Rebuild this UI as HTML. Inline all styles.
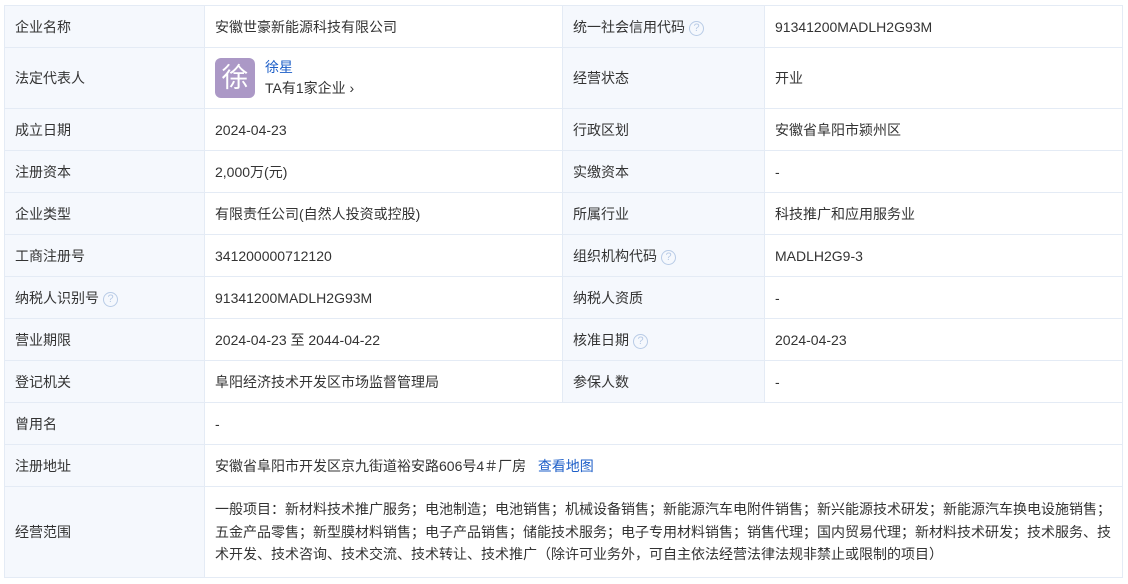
<!DOCTYPE html>
<html><head><meta charset="utf-8"><style>
html,body{margin:0;padding:0;background:#fff;width:1128px;height:584px;overflow:hidden}
body{font-family:"Liberation Sans","Noto Sans CJK SC",sans-serif;font-size:14px;color:#333}
table{position:absolute;left:4px;top:5px;border-collapse:collapse;table-layout:fixed;width:1118px}
td{border:1px solid #e4ebf5;padding:0 10px;height:41px;vertical-align:middle;line-height:20px}
td.l{background:#f5f8fd;color:#333}
.q{display:inline-block;width:15px;height:15px;border:1px solid #b8cbe6;border-radius:50%;color:#b8cbe6;font-size:11px;line-height:13px;text-align:center;vertical-align:1px;margin-left:4px;box-sizing:border-box}
a{color:#1e5fc8;text-decoration:none}
.av{display:inline-block;width:40px;height:40px;background:#ab98c6;border-radius:6px;color:#fff;font-size:27px;line-height:40px;text-align:center;vertical-align:middle}
</style></head><body>
<table>
<colgroup><col style="width:200px"><col style="width:358px"><col style="width:202px"><col style="width:358px"></colgroup>
<tr><td class="l">企业名称</td><td>安徽世豪新能源科技有限公司</td><td class="l">统一社会信用代码<span class="q">?</span></td><td>91341200MADLH2G93M</td></tr>
<tr><td class="l" style="height:60px">法定代表人</td><td><div style="display:flex;align-items:center"><span class="av">徐</span><div style="margin-left:10px;line-height:21px"><a>徐星</a><br>TA有1家企业 ›</div></div></td><td class="l">经营状态</td><td>开业</td></tr>
<tr><td class="l">成立日期</td><td>2024-04-23</td><td class="l">行政区划</td><td>安徽省阜阳市颍州区</td></tr>
<tr><td class="l">注册资本</td><td>2,000万(元)</td><td class="l">实缴资本</td><td>-</td></tr>
<tr><td class="l">企业类型</td><td>有限责任公司(自然人投资或控股)</td><td class="l">所属行业</td><td>科技推广和应用服务业</td></tr>
<tr><td class="l">工商注册号</td><td>341200000712120</td><td class="l">组织机构代码<span class="q">?</span></td><td>MADLH2G9-3</td></tr>
<tr><td class="l">纳税人识别号<span class="q">?</span></td><td>91341200MADLH2G93M</td><td class="l">纳税人资质</td><td>-</td></tr>
<tr><td class="l">营业期限</td><td>2024-04-23 至 2044-04-22</td><td class="l">核准日期<span class="q">?</span></td><td>2024-04-23</td></tr>
<tr><td class="l">登记机关</td><td>阜阳经济技术开发区市场监督管理局</td><td class="l">参保人数</td><td>-</td></tr>
<tr><td class="l">曾用名</td><td colspan="3">-</td></tr>
<tr><td class="l">注册地址</td><td colspan="3">安徽省阜阳市开发区京九街道裕安路606号4＃厂房 &nbsp;&nbsp;<a>查看地图</a></td></tr>
<tr><td class="l" style="height:90px">经营范围</td><td colspan="3" style="line-height:22.5px">一般项目：新材料技术推广服务；电池制造；电池销售；机械设备销售；新能源汽车电附件销售；新兴能源技术研发；新能源汽车换电设施销售；<br>五金产品零售；新型膜材料销售；电子产品销售；储能技术服务；电子专用材料销售；销售代理；国内贸易代理；新材料技术研发；技术服务、技<br>术开发、技术咨询、技术交流、技术转让、技术推广（除许可业务外，可自主依法经营法律法规非禁止或限制的项目）</td></tr>
</table>
</body></html>
